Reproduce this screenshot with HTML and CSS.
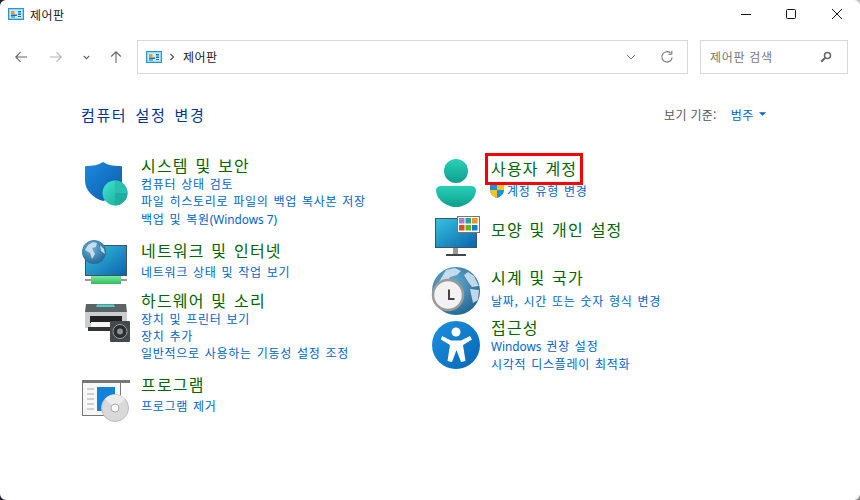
FILE: index.html
```html
<!DOCTYPE html>
<html lang="ko">
<head>
<meta charset="utf-8">
<title>제어판</title>
<link rel="stylesheet" href="styles.css">
</head>
<body>
<svg class="defs" width="0" height="0" aria-hidden="true">
  <defs>
    <symbol id="cp" viewBox="0 0 16 12">
      <rect x="0.500" y="0.500" width="15" height="11" fill="#8fd6f4" stroke="#2f93cc"/>
      <rect x="2" y="2" width="12" height="8" fill="#c8ecfa"/>
      <path d="M3 3h3.500v3H3z" fill="#ef9a1e"/>
      <path d="M3 6.500h6v1.500H3zM3 8.500h4v1H3z" fill="#1a6fb0"/>
      <path d="M10 3h3v1.500h-3zM10 5.500h3v1.500h-3zM10 8h3v1h-3z" fill="#1a6fb0"/>
    </symbol>
    <linearGradient id="screen" x1="0" y1="0" x2="1" y2="1"><stop offset="0" stop-color="#36c4e0"/><stop offset="1" stop-color="#0b62ad"/></linearGradient>
    <radialGradient id="globe" cx="0.4" cy="0.35" r="0.8"><stop offset="0" stop-color="#6ab2d6"/><stop offset="1" stop-color="#175a8a"/></radialGradient>
  </defs>
</svg>
<svg class="corner corner-tl" viewBox="0 0 8 8"><path d="M0 0H6A6 6 0 0 0 0 6Z" fill="#20202c"/></svg>
<svg class="corner corner-tr" viewBox="0 0 8 8"><path d="M8 0H2A6 6 0 0 1 8 6Z" fill="#c4c4c4"/></svg>
<svg class="corner corner-bl" viewBox="0 0 8 8"><path d="M0 8H6A6 6 0 0 1 0 2Z" fill="#20202c"/></svg>
<svg class="corner corner-br" viewBox="0 0 8 8"><path d="M8 8H2A6 6 0 0 0 8 2Z" fill="#8a8a8a"/></svg>
<header class="titlebar">
  <div class="title-left">
    <svg class="cp-icon"><use href="#cp"/></svg>
    <span class="title-text">제어판</span>
  </div>
  <div class="winbtns">
    <svg class="winbtn" viewBox="0 0 46 30"><path d="M19 14.500h10" stroke="#111" fill="none"/></svg>
    <svg class="winbtn" viewBox="0 0 46 30"><rect x="18.500" y="9.500" width="9" height="9" rx="1" stroke="#111" fill="none"/></svg>
    <svg class="winbtn" viewBox="0 0 46 30"><path d="M18 9l10 10M28 9l-10 10" stroke="#111" fill="none"/></svg>
  </div>
</header>
<nav class="toolbar">
  <div class="navbtns">
    <svg class="nav nav-back" viewBox="0 0 12 12"><path d="M12 6H0.800M5.500 1.200L0.800 6l4.700 4.800" stroke="#666" fill="none" stroke-width="1.100"/></svg>
    <svg class="nav nav-fwd" viewBox="0 0 12 12"><path d="M0 6h11.200M6.500 1.200L11.200 6l-4.700 4.800" stroke="#b4b4b4" fill="none" stroke-width="1.100"/></svg>
    <svg class="nav-small" viewBox="0 0 7 5"><path d="M0.800 1l2.700 2.700L6.200 1" stroke="#666" fill="none" stroke-width="1.100"/></svg>
    <svg class="nav nav-up" viewBox="0 0 12 12"><path d="M6 12V0.800M1.200 5.500L6 0.800l4.800 4.700" stroke="#666" fill="none" stroke-width="1.100"/></svg>
  </div>
  <div class="address">
    <svg class="cp-icon"><use href="#cp"/></svg>
    <svg class="crumb" viewBox="0 0 6 8"><path d="M1.500 1l3 3-3 3" stroke="#555" fill="none" stroke-width="1.200"/></svg>
    <span class="address-text">제어판</span>
    <svg class="addr-drop" viewBox="0 0 10 6"><path d="M1 1l4 4 4-4" stroke="#777" fill="none"/></svg>
    <svg class="refresh" viewBox="0 0 14 14"><path d="M12.200 7.500A5.200 5.200 0 1 1 10.500 3" stroke="#777" fill="none" stroke-width="1.100"/><path d="M11.800 0.800v3.400H8.400" stroke="#777" fill="none" stroke-width="1.100"/></svg>
  </div>
  <div class="search">
    <span class="search-text">제어판 검색</span>
    <svg class="search-icon" viewBox="0 0 12 12"><circle cx="7.500" cy="4.500" r="3" stroke="#666" fill="none" stroke-width="1.500"/><path d="M5.200 6.800L1.200 10.800" stroke="#666" stroke-width="2"/></svg>
  </div>
</nav>
<main class="content">
  <div class="heading-row">
    <h1 class="heading">컴퓨터 설정 변경</h1>
    <div class="viewby">
      <span class="viewby-label">보기 기준:</span>
      <a class="viewby-value">범주</a>
      <svg class="caret" viewBox="0 0 8 4"><path d="M0 0h8L4 4z" fill="#0066cc"/></svg>
    </div>
  </div>
  <div class="columns">
    <div class="col col-left">
      <section class="item item-system">
        <svg class="icon" viewBox="0 0 48 48">
          <defs>
            <linearGradient id="shield" x1="0" y1="0" x2="1" y2="1"><stop offset="0" stop-color="#1c8be0"/><stop offset="1" stop-color="#0b5aa8"/></linearGradient>
            <linearGradient id="disc" x1="0" y1="0" x2="1" y2="1"><stop offset="0" stop-color="#3fe6d4"/><stop offset="1" stop-color="#17a394"/></linearGradient>
          </defs>
          <path d="M3 10C3 9 4 9 5 9C11 9 16 8 21 5C26 8 31 9 37 9C39 9 40 9 40 10V24C40 33 31 41 21 44C11 41 3 33 3 24Z" fill="url(#shield)"/>
          <circle cx="33" cy="36" r="12.500" fill="url(#disc)"/>
          <path d="M33 36V23.500A12.500 12.500 0 0 1 45.500 36Z" fill="#2bbfb0"/>
          <path d="M33 36H45.500A12.500 12.500 0 0 1 33 48.500Z" fill="#1fae9f"/>
        </svg>
        <div class="text">
          <h2 class="title">시스템 및 보안</h2>
          <a class="link">컴퓨터 상태 검토</a>
          <a class="link">파일 히스토리로 파일의 백업 복사본 저장</a>
          <a class="link">백업 및 복원<span class="latin">(Windows 7)</span></a>
        </div>
      </section>
      <section class="item item-network">
        <svg class="icon" viewBox="0 0 48 48">
          <defs>
            <linearGradient id="rail" x1="0" y1="0" x2="0" y2="1"><stop offset="0" stop-color="#7be89a"/><stop offset="1" stop-color="#2fbf5e"/></linearGradient>
          </defs>
          <rect x="3.500" y="3.500" width="41" height="30" fill="url(#screen)" stroke="#3c5560"/>
          <rect x="3" y="37" width="42" height="2" fill="#9a9a9a"/>
          <rect x="9" y="34" width="30" height="8" fill="url(#rail)"/>
          <circle cx="12" cy="10" r="12" fill="url(#globe)"/>
          <path d="M6 3l5-3 4 1-1 4-4 1 3 6-3 5-2-6-5-3zM18 3l4 4 1 5-4-3z" fill="#d8e9f2" opacity=".85"/>
        </svg>
        <div class="text">
          <h2 class="title">네트워크 및 인터넷</h2>
          <a class="link link-gap">네트워크 상태 및 작업 보기</a>
        </div>
      </section>
      <section class="item item-hardware">
        <svg class="icon" viewBox="0 0 48 48">
          <rect x="3" y="19" width="42" height="17" rx="1" fill="#c9cdcf"/>
          <path d="M3 20L4 12H44L45 20Z" fill="#5d6264"/>
          <path d="M14 15l1-2.500h17l1 2.500z" fill="#4fd0c4"/>
          <rect x="8" y="24" width="32" height="7" fill="#222"/>
          <rect x="9" y="30" width="22" height="5" fill="#f4f4f4"/>
          <rect x="6" y="35" width="24" height="4" fill="#333"/>
          <rect x="28" y="29" width="20" height="21" rx="1" fill="#444a4c"/>
          <circle cx="38" cy="39.500" r="7" fill="#2a2d2f" stroke="#9a9fa1"/>
          <circle cx="38" cy="39.500" r="3" fill="#8a9093"/>
        </svg>
        <div class="text">
          <h2 class="title">하드웨어 및 소리</h2>
          <a class="link">장치 및 프린터 보기</a>
          <a class="link">장치 추가</a>
          <a class="link">일반적으로 사용하는 기동성 설정 조정</a>
        </div>
      </section>
      <section class="item item-programs">
        <svg class="icon" viewBox="0 0 48 48">
          <rect x="0.500" y="4.500" width="38" height="35" fill="#f7f7f7" stroke="#777"/>
          <rect x="0" y="4" width="48" height="3" fill="#777"/>
          <rect x="38" y="7" width="1" height="33" fill="#777"/>
          <path d="M5 13h7M5 18h7M5 23h7M5 28h7M5 33h7" stroke="#aaa"/>
          <rect x="15" y="11" width="18" height="24" fill="#1383d8"/>
          <circle cx="33" cy="32" r="13.500" fill="#d9d9d9" stroke="#bdbdbd"/>
          <path d="M33 32L23 23A14 14 0 0 1 43 23Z" fill="#ececec"/>
          <circle cx="33" cy="32" r="4" fill="#fafafa" stroke="#aaa"/>
        </svg>
        <div class="text">
          <h2 class="title">프로그램</h2>
          <a class="link link-gap">프로그램 제거</a>
        </div>
      </section>
    </div>
    <div class="col col-right">
      <section class="item item-users">
        <svg class="icon" viewBox="0 0 48 48">
          <defs>
            <linearGradient id="person" x1="0" y1="0" x2="0" y2="1"><stop offset="0" stop-color="#28d0b8"/><stop offset="1" stop-color="#0f9f8e"/></linearGradient>
          </defs>
          <circle cx="24" cy="12" r="12" fill="url(#person)"/>
          <path d="M9 27H39C42 27 44 29 44 31C44 40 34 48 24 48C14 48 4 40 4 31C4 29 6 27 9 27Z" fill="url(#person)"/>
        </svg>
        <div class="text">
          <h2 class="title title-boxed">사용자 계정<span class="redbox"></span></h2>
          <a class="link link-shield">
            <svg class="uac" viewBox="0 0 14 15"><path d="M7 0l7 2v5c0 4-3 6.500-7 8-4-1.500-7-4-7-8V2z" fill="#1b8fe0"/><path d="M7 0l7 2v5H7zM0 7h7v8C3 13.500 0 11 0 7z" fill="#f8c51c"/></svg>계정 유형 변경</a>
        </div>
      </section>
      <section class="item item-appearance">
        <svg class="icon icon-short" viewBox="0 0 48 40">
          <rect x="3.500" y="2.500" width="41" height="29" fill="url(#screen)" stroke="#3c5560"/>
          <rect x="21" y="32" width="5" height="6" fill="#999"/>
          <rect x="14" y="38" width="20" height="2" fill="#444"/>
          <rect x="25.500" y="0.500" width="22" height="16" fill="#fff" stroke="#777"/>
          <rect x="27" y="2" width="5.500" height="5.500" fill="#a77fd0"/><rect x="33.500" y="2" width="5.500" height="5.500" fill="#23a59b"/><rect x="40" y="2" width="5.500" height="5.500" fill="#f0961a"/>
          <rect x="27" y="9" width="5.500" height="5.500" fill="#d8501c"/><rect x="33.500" y="9" width="5.500" height="5.500" fill="#6ab21e"/><rect x="40" y="9" width="5.500" height="5.500" fill="#0f7fd6"/>
        </svg>
        <div class="text text-appearance">
          <h2 class="title">모양 및 개인 설정</h2>
        </div>
      </section>
      <section class="item item-clock">
        <svg class="icon" viewBox="0 0 48 48">
          <circle cx="24" cy="24" r="24" fill="url(#globe)"/>
          <path d="M14 3l9-2 6 3-4 4-7 2-3 5-8 0zM36 5l6 4 5 10-7 1-5-7-3-5zM38 22l9 1-1 10-5 3z" fill="#d8e9f2" opacity=".85"/>
          <circle cx="16" cy="28" r="15" fill="#f2f2f2" stroke="#9a9a9a" stroke-width="2.500"/>
          <path d="M17 22.500v9.500h5.500" stroke="#444" stroke-width="2" fill="none"/>
        </svg>
        <div class="text text-clock">
          <h2 class="title">시계 및 국가</h2>
          <a class="link link-clock">날짜, 시간 또는 숫자 형식 변경</a>
        </div>
      </section>
      <section class="item item-access">
        <svg class="icon icon-access" viewBox="0 0 48 48">
          <defs><linearGradient id="acc" x1="0" y1="0" x2="1" y2="1"><stop offset="0" stop-color="#1c93e0"/><stop offset="1" stop-color="#0665b5"/></linearGradient></defs>
          <circle cx="24" cy="24" r="24" fill="url(#acc)"/>
          <circle cx="24" cy="11" r="4.500" fill="#fff"/>
          <path d="M10 15L19 19.500H29L38 15L40 18.500L31 24L33.500 40L29 41L24.500 29L20 41L15.500 40L18 24L9 18.500Z" fill="#fff"/>
        </svg>
        <div class="text">
          <h2 class="title">접근성</h2>
          <a class="link"><span class="latin">Windows</span> 권장 설정</a>
          <a class="link">시각적 디스플레이 최적화</a>
        </div>
      </section>
    </div>
  </div>
</main>
</body>
</html>
```
FILE: styles.css
```css
* { box-sizing: border-box; }
html, body { margin: 0; padding: 0; }
body {
  position: relative;
  width: 860px;
  height: 500px;
  overflow: hidden;
  background: #fff;
  font-family: "Noto Sans CJK KR", "Noto Sans", sans-serif;
  font-size: 12px;
  color: #1a1a1a;
}
.defs { display: block; height: 0; }
.corner { position: absolute; width: 8px; height: 8px; }
.corner-tl { left: 0; top: 0; }
.corner-tr { right: 0; top: 0; }
.corner-bl { left: 0; bottom: 0; }
.corner-br { right: 0; bottom: 0; }
.titlebar { display: flex; justify-content: space-between; height: 30px; }
.title-left { display: flex; align-items: center; gap: 6px; padding-left: 8px; height: 28px; font-size: 12px; }
.title-text { letter-spacing: .4px; }
.cp-icon { width: 16px; height: 12px; flex: none; }
.winbtns { display: flex; }
.winbtn { width: 46px; height: 30px; }
.toolbar { display: flex; align-items: center; height: 34px; margin-top: 10px; padding-left: 15px; }
.navbtns { display: flex; align-items: center; width: 122px; }
.nav { width: 12px; height: 12px; flex: none; }
.nav-fwd { margin-left: 23px; }
.nav-small { width: 7px; height: 5px; margin-left: 21px; flex: none; }
.nav-up { margin-left: 20px; }
.address {
  display: flex; align-items: center; width: 551px; height: 34px;
  border: 1px solid #d9d9d9; padding: 0 0 1px 8px;
}
.crumb { width: 6px; height: 8px; margin-left: 7px; }
.address-text { margin-left: 8px; font-size: 12px; letter-spacing: .5px; }
.addr-drop { width: 10px; height: 6px; margin-left: auto; }
.refresh { width: 14px; height: 14px; margin-left: 24px; margin-right: 13px; }
.search {
  display: flex; align-items: center; justify-content: space-between; width: 148px; height: 34px;
  margin-left: 12px; border: 1px solid #d9d9d9; padding: 0 15px 1px 9px;
}
.search-text { color: #777; font-size: 12px; letter-spacing: .7px; }
.search-icon { width: 12px; height: 12px; }
.content { padding: 0 94px 0 81px; }
.heading-row { display: flex; justify-content: space-between; align-items: center; margin-top: 29px; height: 22px; }
.heading { margin: 0; font-weight: 400; font-size: 15px; color: #003399; letter-spacing: 1.6px; word-spacing: 2.500px; }
.viewby { display: flex; align-items: center; font-size: 12px; }
.viewby-label { color: #555; letter-spacing: .3px; }
.viewby-value { color: #0066cc; margin-left: 14px; letter-spacing: .6px; }
.caret { width: 7px; height: 4px; margin-left: 5px; }
.columns { display: flex; margin-top: 32px; }
.col { display: flex; flex-direction: column; }
.col-left { width: 351px; padding-left: 1px; }
.item { display: flex; gap: 11px; }
.icon { width: 48px; height: 48px; flex: none; overflow: visible; }
.icon-short { height: 40px; }
.icon-access { margin-top: 2px; }
.text { display: flex; flex-direction: column; margin-top: -1px; }
.title { margin: 0 0 1px; font-weight: 400; font-size: 16px; line-height: 18px; color: #006600; letter-spacing: 1.200px; word-spacing: 1px; white-space: nowrap; }
.link { display: block; font-size: 12px; line-height: 17.300px; color: #0066cc; letter-spacing: .72px; word-spacing: .9px; white-space: nowrap; }
.latin { letter-spacing: 0; word-spacing: 0; font-family: "Noto Sans", sans-serif; font-size: 11.800px; }
.link-gap { margin-top: 3px; }
.link-clock { margin-top: 5px; }
.item-network { margin-top: 14px; }
.item-hardware { margin-top: 2px; }
.item-programs { margin-top: 14px; }
.item-users { margin-top: 2px; }
.item-appearance { margin-top: 9px; }
.item-clock { margin-top: 11px; }
.item-access { margin-top: 4px; }
.text-appearance { margin-top: 4px; }
.text-clock { margin-top: 1px; }
.title-boxed { position: relative; margin-top: 1px; }
.redbox { position: absolute; left: -6px; top: -6px; width: 98px; height: 32px; border: 3px solid #f00; }
.link-shield { margin-top: 4px; margin-left: -1px; display: flex; align-items: center; }
.uac { width: 14px; height: 15px; margin-right: 3px; flex: none; }
```
